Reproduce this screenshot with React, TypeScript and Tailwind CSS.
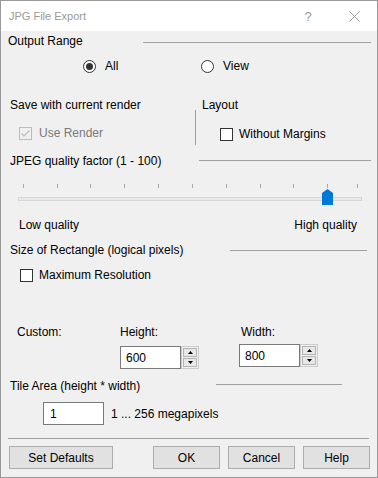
import React from "react";

function Radio({ checked }: { checked?: boolean }) {
  return (
    <span className="w-[13px] h-[13px] rounded-full border border-[#333333] bg-white flex items-center justify-center shrink-0">
      {checked && <span className="w-[7px] h-[7px] rounded-full bg-[#333333]" />}
    </span>
  );
}

function Check({ disabled, checked }: { disabled?: boolean; checked?: boolean }) {
  return (
    <span
      className={
        disabled
          ? "w-[13px] h-[13px] border border-[#bcbcbc] bg-[#f0f0f0] flex items-center justify-center shrink-0"
          : "w-[13px] h-[13px] border border-[#333333] bg-white flex items-center justify-center shrink-0"
      }
    >
      {checked && (
        <svg width="11" height="11" viewBox="0 0 11 11">
          <path d="M1.5 5.5 L4 8 L9.5 2.5" fill="none" stroke={disabled ? "#bcbcbc" : "#333"} strokeWidth="1.2" />
        </svg>
      )}
    </span>
  );
}

function SpinBox({ value }: { value: string }) {
  return (
    <div className="flex">
      <div className="w-[61px] h-[23px] border border-[#7a7a7a] bg-white flex items-center pl-[5px]">{value}</div>
      <div className="w-[18px] h-[23px] border border-[#cccccc] bg-[#f0f0f0] p-px flex flex-col gap-px">
        <div className="flex-1 bg-[#e8e8e8] border border-[#b4b4b4] flex items-center justify-center">
          <svg width="5" height="3" viewBox="0 0 5 3">
            <path d="M0 3 L2.5 0 L5 3 Z" fill="#000" />
          </svg>
        </div>
        <div className="flex-1 bg-[#e8e8e8] border border-[#b4b4b4] flex items-center justify-center">
          <svg width="5" height="3" viewBox="0 0 5 3">
            <path d="M0 0 L5 0 L2.5 3 Z" fill="#000" />
          </svg>
        </div>
      </div>
    </div>
  );
}

function Slider() {
  const ticks = [22, 56, 89, 123, 157, 191, 225, 259, 292, 326, 356];
  return (
    <svg width="376" height="28" viewBox="0 0 376 28" className="mt-[10px] block shrink-0">
      {ticks.map((x) => (
        <rect key={x} x={x} y={4} width={1} height={4} fill="#a8a8a8" />
      ))}
      <rect x={17.5} y={17.5} width={343} height={3} fill="#e7eaea" stroke="#d6d6d6" />
      <path d="M321 13 L326.5 9 L332 13 L332 25 L321 25 Z" fill="#0078d7" />
    </svg>
  );
}

export default function App() {
  return (
    <div className="w-[378px] h-[478px] border border-[#9a9a9a] bg-[#f0f0f0] flex flex-col text-[12px] text-black overflow-hidden font-['Liberation_Sans',Arial,sans-serif] leading-none">
      {/* Title bar */}
      <div className="h-[30px] bg-white flex items-center shrink-0">
        <span className="pl-[8px] text-[#999999] text-[11px]">JPG File Export</span>
        <div className="ml-auto flex h-full">
          <div className="w-[46px] flex items-center justify-center text-[#999999] text-[13px]">?</div>
          <div className="w-[46px] flex items-center justify-center">
            <svg width="11" height="11" viewBox="0 0 11 11">
              <path d="M0.5 0.5 L10.5 10.5 M10.5 0.5 L0.5 10.5" stroke="#999" strokeWidth="1" />
            </svg>
          </div>
        </div>
      </div>

      {/* Output Range */}
      <div className="h-[20px] flex items-center pl-[7px] shrink-0">
        <span className="w-[135px]">Output Range</span>
        <div className="w-[228px] h-px bg-[#a0a0a0] mt-[2px]" />
      </div>
      <div className="h-[30px] flex items-center pl-[82px] shrink-0">
        <div className="w-[118px] flex items-center gap-[9px]">
          <Radio checked />
          <span>All</span>
        </div>
        <div className="flex items-center gap-[9px]">
          <Radio />
          <span>View</span>
        </div>
      </div>

      {/* Save / Layout */}
      <div className="h-[70px] flex shrink-0">
        <div className="w-[194px] flex flex-col">
          <div className="h-[19px] mt-[14px] flex items-center pl-[9px]">Save with current render</div>
          <div className="h-[18px] mt-[10px] flex items-center pl-[18px] gap-[7px] text-[#7a7a7a]">
            <Check disabled checked />
            <span>Use Render</span>
          </div>
        </div>
        <div className="w-px h-[35px] mt-[29px] bg-[#a0a0a0]" />
        <div className="ml-[6px] flex flex-col">
          <div className="h-[19px] mt-[14px] flex items-center">Layout</div>
          <div className="h-[18px] mt-[11px] flex items-center pl-[18px] gap-[6px]">
            <Check />
            <span>Without Margins</span>
          </div>
        </div>
      </div>

      {/* JPEG quality */}
      <div className="h-[19px] flex items-center pl-[9px] shrink-0">
        <span className="w-[189px]">JPEG quality factor (1 - 100)</span>
        <div className="w-[172px] h-px bg-[#a0a0a0]" />
      </div>
      <Slider />
      <div className="mt-[8px] h-[18px] flex items-center justify-between pl-[18px] pr-[20px] shrink-0">
        <span>Low quality</span>
        <span>High quality</span>
      </div>

      {/* Size of Rectangle */}
      <div className="mt-[7px] h-[18px] flex items-center pl-[9px] shrink-0">
        <span className="w-[220px]">Size of Rectangle (logical pixels)</span>
        <div className="w-[137px] h-px bg-[#a0a0a0]" />
      </div>
      <div className="mt-[7px] h-[18px] flex items-center pl-[19px] gap-[6px] shrink-0">
        <Check />
        <span>Maximum Resolution</span>
      </div>

      <div className="mt-[38px] h-[19px] flex items-center pl-[16px] shrink-0">
        <span className="w-[103px]">Custom:</span>
        <span className="w-[121px]">Height:</span>
        <span>Width:</span>
      </div>
      <div className="mt-[3px] h-[24px] flex items-start pl-[119px] shrink-0">
        <div className="mt-[2px]">
          <SpinBox value="600" />
        </div>
        <div className="ml-[40px]">
          <SpinBox value="800" />
        </div>
      </div>

      {/* Tile Area */}
      <div className="mt-[9px] h-[19px] flex items-start pl-[9px] shrink-0">
        <span className="w-[206px] leading-[19px]">Tile Area (height * width)</span>
        <div className="w-[126px] h-px bg-[#a0a0a0] mt-[7px]" />
      </div>
      <div className="mt-[6px] h-[23px] flex items-center pl-[42px] gap-[7px] shrink-0">
        <div className="w-[61px] h-[23px] border border-[#7a7a7a] bg-white flex items-center pl-[6px]">1</div>
        <span>1 ... 256 megapixels</span>
      </div>

      <div className="mt-[13px] ml-[7px] w-[361px] h-px bg-[#a0a0a0] shrink-0" />

      <div className="mt-[7px] h-[23px] flex pl-[8px] shrink-0">
        <button className="w-[104px] h-[23px] bg-[#e1e1e1] border border-[#adadad] flex items-center justify-center">
          Set Defaults
        </button>
        <button className="ml-[40px] w-[67px] h-[23px] bg-[#e1e1e1] border border-[#adadad] flex items-center justify-center">
          OK
        </button>
        <button className="ml-[8px] w-[67px] h-[23px] bg-[#e1e1e1] border border-[#adadad] flex items-center justify-center">
          Cancel
        </button>
        <button className="ml-[8px] w-[67px] h-[23px] bg-[#e1e1e1] border border-[#adadad] flex items-center justify-center">
          Help
        </button>
      </div>
    </div>
  );
}
